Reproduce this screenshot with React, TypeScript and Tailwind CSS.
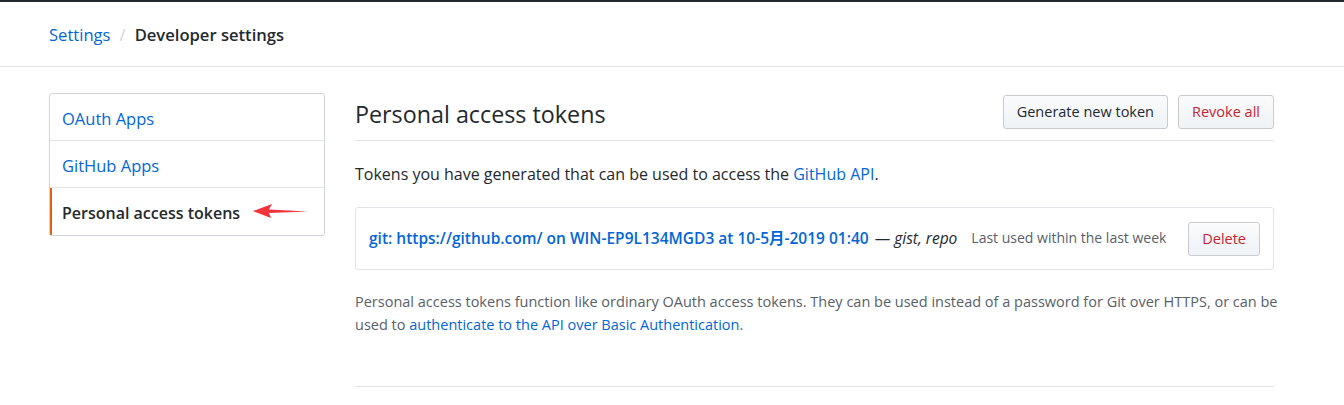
import React from "react";

const btn =
  "h-[34px] px-[13px] rounded-[3px] border border-[#c8cbcf] bg-gradient-to-b from-[#fafbfc] to-[#eff3f6] text-[14.5px]";

export default function App() {
  return (
    <div
      className="w-[1344px] h-[405px] bg-white text-[#24292e] overflow-hidden border-t-2 border-[#24292e]"
      style={{ fontFamily: '"Open Sans", "Noto Sans CJK SC", sans-serif' }}
    >
      <div className="h-[65px] border-b border-[#e1e4e8] flex items-center px-[49px] pt-[3px] text-[16.6px]">
        <span className="text-[#0366d6]">Settings</span>
        <span className="text-[#d1d5da] mx-[9px]">/</span>
        <span className="font-semibold">Developer settings</span>
      </div>
      <div className="flex px-[49px] pt-[26px] gap-[30px]">
        <div className="w-[276px] h-[143px] border border-[#d1d5da] rounded-[3px] flex flex-col text-[16.5px]">
          <div className="h-[47px] flex items-center px-[12px] pt-[4px] text-[#0366d6] border-b border-[#e1e4e8]">OAuth Apps</div>
          <div className="h-[47px] flex items-center px-[12px] pt-[4px] text-[#0366d6] border-b border-[#e1e4e8]">GitHub Apps</div>
          <div className="h-[47px] flex items-center pl-[10px] pt-[2px] text-[16px] font-semibold border-l-2 border-[#e36209] relative">
            Personal access tokens
            <svg className="absolute left-[201px] top-[15px]" width="56" height="16" viewBox="0 0 56 16">
              <polygon points="0,8 19,1 16,6.5 55,8.5 16,10 18,15" fill="#f1333c" />
            </svg>
          </div>
        </div>
        <div className="w-[919px] flex flex-col">
          <div className="flex items-start justify-between h-[48px] border-b border-[#e1e4e8]">
            <h2 className="text-[23.3px] leading-[36px] mt-[3px] font-normal">Personal access tokens</h2>
            <div className="flex gap-[10px] mt-[2px]">
              <button className={btn}>Generate new token</button>
              <button className={btn + " text-[#cb2431]"}>Revoke all</button>
            </div>
          </div>
          <p className="text-[16px] leading-[24px] mt-[21px]">
            Tokens you have generated that can be used to access the <span className="text-[#0366d6]">GitHub API</span>.
          </p>
          <div className="mt-[21px] h-[63px] border border-[#e1e4e8] rounded-[3px] flex items-center pl-[13px] pr-[13px] text-[14px]">
            <span className="font-semibold text-[15.5px] text-[#0366d6]">git: https://github.com/ on WIN-EP9L134MGD3 at 10-5月-2019 01:40</span>
            <span className="ml-[6px] text-[15.5px]">— <em>gist, repo</em></span>
            <span className="ml-[14px] text-[#586069] -mt-[3px]">Last used within the last week</span>
            <div className="flex-1" />
            <button className={btn + " text-[#cb2431]"}>Delete</button>
          </div>
          <div className="text-[14.5px] text-[#586069] leading-[23px] mt-[20px] mr-[-10px] flex flex-col">
            <span>Personal access tokens function like ordinary OAuth access tokens. They can be used instead of a password for Git over HTTPS, or can be</span>
            <span>
              used to <a className="text-[#0366d6]">authenticate to the API over Basic Authentication</a>.
            </span>
          </div>
          <div className="mt-[50px] border-b border-[#e1e4e8]" />
        </div>
      </div>
    </div>
  );
}
